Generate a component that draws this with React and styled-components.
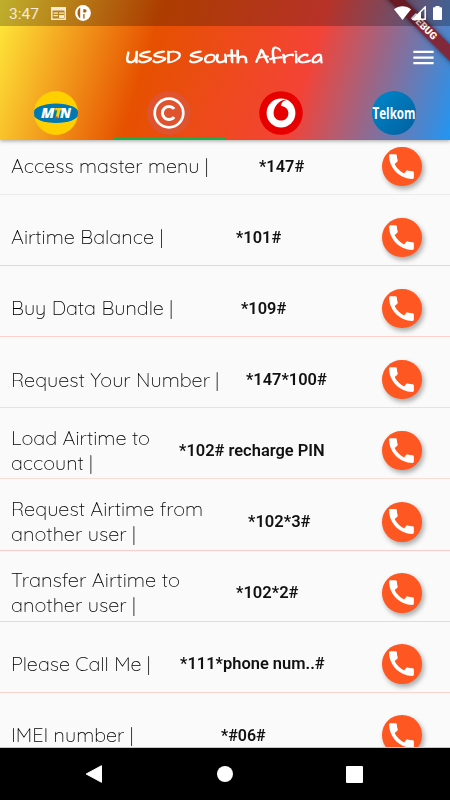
import { useLayoutEffect, useRef, useState } from 'react'
import styled, { createGlobalStyle } from 'styled-components'
import { MdCall, MdMenu } from 'react-icons/md'

const codes = [
  { lines: [['Access master menu |', 198]], code: '*147#', codeWidth: 45, line: '#ececec' },
  { lines: [['Airtime Balance |', 152]], code: '*101#', codeWidth: 45, line: '#f9cdcb' },
  { lines: [['Buy Data Bundle |', 162]], code: '*109#', codeWidth: 45, line: '#fdcfc8' },
  { lines: [['Request Your Number |', 208]], code: '*147*100#', codeWidth: 81, line: '#fbd9d7' },
  { lines: [['Load Airtime to', 139], ['account |', 82]], code: '*102# recharge PIN', codeWidth: 146, line: '#fbdcd4' },
  { lines: [['Request Airtime from', 192], ['another user |', 125]], code: '*102*3#', codeWidth: 62, line: '#f9cdcb' },
  { lines: [['Transfer Airtime to', 169], ['another user |', 125]], code: '*102*2#', codeWidth: 62, line: '#fbd3cd' },
  { lines: [['Please Call Me |', 140]], code: '*111*phone num..#', codeWidth: 145, line: '#fbd3cd' },
  { lines: [['IMEI number |', 122]], code: '*#06#', codeWidth: 45, line: '#fbd3cd' },
]

// stretches one line of text to the given width
function FitText({ width, children }) {
  const ref = useRef(null)
  const [scale, setScale] = useState(1)

  useLayoutEffect(() => {
    setScale(width / ref.current.offsetWidth)
  }, [width, children])

  return (
    <FitBox $width={width}>
      <FitInner ref={ref} style={{ transform: `scaleX(${scale})` }}>
        {children}
      </FitInner>
    </FitBox>
  )
}

function MtnLogo() {
  return (
    <svg width="44" height="44" viewBox="0 0 44 44">
      <defs>
        <clipPath id="mtn">
          <circle cx="22" cy="22" r="22" />
        </clipPath>
      </defs>
      <circle cx="22" cy="22" r="22" fill="#ffd000" />
      <g clipPath="url(#mtn)">
        <ellipse cx="22" cy="22.3" rx="23" ry="9.8" fill="#0079b3" />
      </g>
      <g fontFamily="'Open Sans', sans-serif" fontWeight="800" fontStyle="italic" fontSize="13.5">
        <text x="7" y="27" fill="#fff" textLength="13.5" lengthAdjust="spacingAndGlyphs">M</text>
        <text x="19.5" y="27" fill="#ffd000" textLength="8.5" lengthAdjust="spacingAndGlyphs">T</text>
        <text x="26" y="27" fill="#fff" textLength="11" lengthAdjust="spacingAndGlyphs">N</text>
      </g>
      <path d="M21 25.500h3l-.7 2h-1.800z" fill="#e0402a" />
    </svg>
  )
}

function CellCLogo() {
  return (
    <svg width="44" height="44" viewBox="0 0 44 44">
      <circle cx="22" cy="22" r="22" fill="#e0532f" />
      <circle cx="22" cy="22" r="14.3" fill="none" stroke="#fff" strokeWidth="2.7" />
      <path d="M27.2 17.9a6.6 6.6 0 1 0 0 8.2" fill="none" stroke="#fff" strokeWidth="3" />
    </svg>
  )
}

function VodafoneLogo() {
  return (
    <svg width="44" height="44" viewBox="0 0 44 44">
      <circle cx="22" cy="22" r="21.8" fill="#e60000" />
      <circle cx="22" cy="22" r="14.4" fill="#fff" />
      <path
        d="M22.2 29.6c-4.300 0-7.600-3.100-7.600-7.400 0-6 4.900-12.600 11.400-13.400.4 0 .8 0 .9.2-3 .8-4.900 3.300-4.900 6 4.500.6 7.400 3.200 7.400 7.200 0 4.200-3.100 7.400-7.200 7.400z"
        fill="#e60000"
      />
    </svg>
  )
}

function TelkomLogo() {
  return (
    <svg width="44" height="44" viewBox="0 0 44 44">
      <defs>
        <linearGradient id="telkom" x1="0" y1="0" x2="1" y2="1">
          <stop offset="0" stopColor="#0088cc" />
          <stop offset="1" stopColor="#00609f" />
        </linearGradient>
      </defs>
      <circle cx="22" cy="22" r="22" fill="url(#telkom)" />
      <text
        x="0.5"
        y="27.5"
        fill="#fff"
        fontFamily="'Open Sans', sans-serif"
        fontWeight="700"
        fontSize="16"
        textLength="43"
        lengthAdjust="spacingAndGlyphs"
      >
        Telkom
      </text>
    </svg>
  )
}

const tabs = [
  { id: 'mtn', Logo: MtnLogo },
  { id: 'cellc', Logo: CellCLogo, active: true },
  { id: 'vodafone', Logo: VodafoneLogo },
  { id: 'telkom', Logo: TelkomLogo },
]

function StatusIcons() {
  return (
    <SystemIcons>
      <svg width="17" height="14" viewBox="0 0 17 14">
        <path d="M8.500 14 0 3.300C4.800-.9 12.200-.9 17 3.300z" fill="#fff" />
      </svg>
      <svg width="14" height="14" viewBox="0 0 14 14">
        <path d="M13.200 1v12.200H1z" fill="none" stroke="#fff" strokeWidth="1.500" />
        <path d="M9 5v8.500H.5z" fill="#fff" />
      </svg>
      <svg width="9" height="14" viewBox="0 0 9 14">
        <path d="M2.500 0h4v1.300H8.200a.8.8 0 0 1 .8.8v11.100a.8.8 0 0 1-.8.8H.8a.8.8 0 0 1-.8-.8V2.100a.8.8 0 0 1 .8-.8h1.700z" fill="#fff" />
      </svg>
    </SystemIcons>
  )
}

export default function App() {
  return (
    <Screen>
      <GlobalStyle />
      <Header>
        <StatusBar>
          <Clock>3:47</Clock>
          <Notifications>
            <svg width="15" height="13" viewBox="0 0 15 13">
              <path d="M.8 1h13.400v11.300H.8z" fill="none" stroke="#f6ead8" strokeWidth="1.500" />
              <path d="M0 0h15v3.500H0zM2.500 5.500h4.500v1.200H2.500zM2.500 8h4.500v1.200H2.500zM8 5.500h5v1.200H8zM8 8h5v3H8z" fill="#f6ead8" />
            </svg>
            <svg width="16" height="16" viewBox="0 0 16 16">
              <circle cx="8" cy="8" r="7.900" fill="#fff" />
              <path d="M5.200 2.600v10.800C1.600 11 1.600 5 5.200 2.600z" fill="#a95c12" />
              <path d="M8.300 4.200h1.700a1.600 1.600 0 0 1 0 3.200H8.300zM8.300 9h1.300v4.600H8.300z" fill="#a95c12" />
            </svg>
          </Notifications>
          <StatusIcons />
        </StatusBar>
        <TitleBar>
          <Title>
            <FitText width={55}>USSD</FitText>
            <FitText width={58}>South</FitText>
            <FitText width={68}>Africa</FitText>
          </Title>
          <MenuButton aria-label="menu">
            <MdMenu size={27} />
          </MenuButton>
        </TitleBar>
        <TabBar>
          {tabs.map(({ id, Logo, active }) => (
            <Tab key={id} $active={active}>
              <Logo />
            </Tab>
          ))}
        </TabBar>
        <BannerClip>
          <DebugBanner>DEBUG</DebugBanner>
        </BannerClip>
      </Header>
      <Main>
        <List>
          {codes.map(({ lines, code, codeWidth, line }) => (
            <Row key={code} $line={line}>
              <Label>
                {lines.map(([text, width]) => (
                  <FitText key={text} width={width}>
                    {text}
                  </FitText>
                ))}
              </Label>
              <Code>
                <FitText width={codeWidth}>{code}</FitText>
              </Code>
              <CallButton aria-label="call">
                <MdCall size={33} />
              </CallButton>
            </Row>
          ))}
        </List>
      </Main>
      <NavBar>
        <svg width="18" height="18" viewBox="0 0 18 18">
          <path d="M16.500.7v16.600L1.200 9z" fill="#fff" stroke="#fff" strokeLinejoin="round" />
        </svg>
        <HomeKey />
        <RecentKey />
      </NavBar>
    </Screen>
  )
}

const GlobalStyle = createGlobalStyle`
  * {
    box-sizing: border-box;
  }

  body {
    margin: 0;
  }

  button {
    padding: 0;
    border: none;
    background: none;
    color: #fff;
  }

  svg {
    display: block;
    flex-shrink: 0;
  }
`

const Screen = styled.div`
  display: flex;
  flex-direction: column;
  width: 450px;
  height: 800px;
  background: #fafafa;
  font-family: Roboto, sans-serif;
  overflow: hidden;
`

const FitBox = styled.span`
  display: block;
  width: ${({ $width }) => $width}px;
  white-space: nowrap;
`

const FitInner = styled.span`
  display: inline-block;
  transform-origin: left center;
  will-change: transform;
`

const Header = styled.header`
  position: relative;
  z-index: 1;
  display: flex;
  flex-direction: column;
  height: 140px;
  flex-shrink: 0;
  background: linear-gradient(107.3deg, #ffeb3b, #e65100 33.3%, #f44336 66.6%, #2196f3);
  box-shadow: 0 1px 4px rgba(0, 0, 0, 0.35);
`

const StatusBar = styled.div`
  position: relative;
  z-index: 2;
  display: flex;
  align-items: center;
  height: 26px;
  padding: 0 8px 0 9px;
  background: rgba(0, 0, 0, 0.25);
`

const Clock = styled.span`
  width: 42px;
  padding-top: 2px;
  font-size: 15.5px;
  color: #f6ead8;
`

const Notifications = styled.div`
  display: flex;
  align-items: center;
  gap: 9px;
`

const SystemIcons = styled.div`
  display: flex;
  align-items: center;
  gap: 1px;
  margin-left: auto;

  svg:last-child {
    margin-left: 6px;
  }
`

const TitleBar = styled.div`
  display: flex;
  align-items: center;
  height: 62px;
  padding: 0 13px 0 126px;
`

const Title = styled.h1`
  display: flex;
  gap: 8px;
  margin: 0;
  color: #fff;
  font-family: 'Architects Daughter', Lato, sans-serif;
  font-size: 20px;
  font-weight: 700;
  line-height: 26px;
`

const MenuButton = styled.button`
  margin-left: auto;
`

const TabBar = styled.nav`
  display: grid;
  grid-template-columns: repeat(4, 1fr);
  height: 52px;
`

const Tab = styled.div`
  display: flex;
  justify-content: center;
  padding-top: 3px;
  border-bottom: 2px solid ${({ $active }) => ($active ? '#12b34c' : 'transparent')};
`

const BannerClip = styled.div`
  position: absolute;
  top: 0;
  right: 0;
  z-index: 1;
  width: 80px;
  height: 80px;
  overflow: hidden;
  pointer-events: none;
`

const DebugBanner = styled.div`
  position: absolute;
  top: 20.5px;
  left: 4px;
  width: 100px;
  height: 11.5px;
  background: rgba(140, 24, 34, 0.85);
  box-shadow: 0 0 5px rgba(0, 0, 0, 0.5);
  color: #fff;
  font-size: 10px;
  font-weight: 900;
  line-height: 12px;
  text-align: center;
  transform: rotate(45deg);
`

const Main = styled.main`
  height: 608px;
  overflow: hidden;
  border-bottom: 1px solid #c4c8c4;
`

const List = styled.div`
  margin-top: -16px;
`

const Row = styled.div`
  display: flex;
  align-items: center;
  justify-content: space-between;
  height: 71.1px;
  padding: 14.5px 28.5px 0 11px;
  border-bottom: 1px solid ${({ $line }) => $line};
`

const Label = styled.div`
  padding-bottom: 1px;
  color: #000;
  font-family: Quicksand, Lato, sans-serif;
  font-size: 19.5px;
  font-weight: 300;
  line-height: 25px;
`

const Code = styled.div`
  color: #111;
  font-size: 16px;
  font-weight: 600;
`

const CallButton = styled.button`
  display: flex;
  align-items: center;
  justify-content: center;
  width: 39.5px;
  height: 39.5px;
  margin-left: 28px;
  border-radius: 50%;
  background: #ff5722;
  box-shadow: 2px 3px 5px rgba(0, 0, 0, 0.32);
`

const NavBar = styled.footer`
  display: flex;
  align-items: center;
  justify-content: space-between;
  height: 52px;
  padding: 0 87px 0 85px;
  background: #000;
`

const HomeKey = styled.span`
  width: 16px;
  height: 16px;
  border-radius: 50%;
  background: #fff;
`

const RecentKey = styled.span`
  width: 17px;
  height: 17px;
  border-radius: 1px;
  background: #fff;
`
